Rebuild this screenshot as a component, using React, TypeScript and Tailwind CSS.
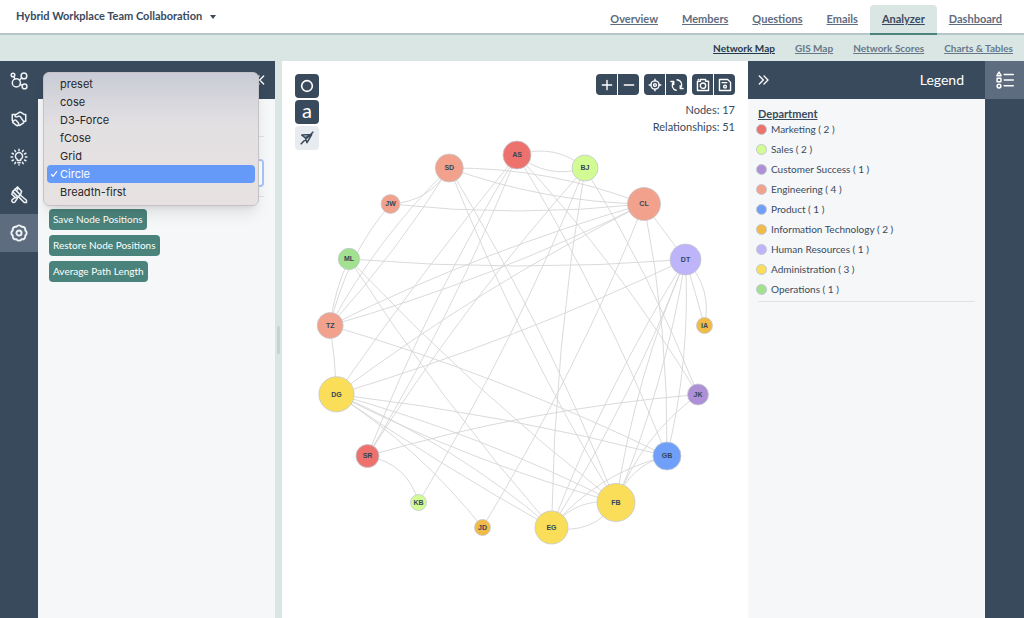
import type { ReactNode } from 'react';
import { RiShakeHandsLine } from 'react-icons/ri';

/* Network analyzer page: nav bars, layout panel, circle graph, legend */

type Node = { x: number; y: number; r: number; fill: string };

const C = {
  red: '#ed716c',
  lime: '#d2fb94',
  purple: '#ae90d6',
  salmon: '#f1a18c',
  blue: '#6f9ff8',
  orange: '#f2bb48',
  lilac: '#beb4fa',
  yellow: '#fade59',
  green: '#a2e18f',
};

const nodes: Record<string, Node> = {
  AS: { x: 517, y: 155, r: 14, fill: C.red },
  BJ: { x: 585, y: 168, r: 13, fill: C.lime },
  CL: { x: 644, y: 204, r: 16.5, fill: C.salmon },
  DT: { x: 685.5, y: 259.5, r: 15.5, fill: C.lilac },
  IA: { x: 704.5, y: 325.5, r: 8, fill: C.orange },
  JK: { x: 698, y: 394.5, r: 10.5, fill: C.purple },
  GB: { x: 667, y: 456, r: 14, fill: C.blue },
  FB: { x: 616, y: 502.5, r: 19, fill: C.yellow },
  EG: { x: 551.5, y: 527.5, r: 16.5, fill: C.yellow },
  JD: { x: 482.5, y: 527.5, r: 8, fill: C.orange },
  KB: { x: 418.5, y: 502.5, r: 8, fill: C.lime },
  SR: { x: 367.5, y: 456, r: 11.5, fill: C.red },
  DG: { x: 336.5, y: 394.3, r: 17.6, fill: C.yellow },
  TZ: { x: 330.2, y: 325.5, r: 13, fill: C.salmon },
  ML: { x: 349, y: 259, r: 10.7, fill: C.green },
  JW: { x: 390.5, y: 204, r: 9.4, fill: C.salmon },
  SD: { x: 449.3, y: 168, r: 14, fill: C.salmon },
};

// from, to, and a point the curve passes through
const edges: [string, string, number, number][] = [
  ['AS', 'BJ', 552, 152],
  ['AS', 'BJ', 552, 171],
  ['SD', 'CL', 545, 176],
  ['SD', 'CL', 545, 194],
  ['JW', 'CL', 518, 211],
  ['CL', 'TZ', 510, 248],
  ['CL', 'TZ', 510, 264],
  ['CL', 'DG', 510, 278],
  ['BJ', 'SR', 447, 339],
  ['BJ', 'KB', 510, 335],
  ['BJ', 'EG', 562, 340],
  ['CL', 'JD', 585, 338],
  ['CL', 'GB', 663, 340],
  ['CL', 'DT', 667, 235],
  ['DT', 'ML', 510, 266],
  ['DT', 'DG', 510, 335],
  ['DT', 'IA', 697, 299],
  ['DT', 'IA', 705, 295],
  ['DT', 'GB', 685, 340],
  ['DT', 'EG', 640, 337],
  ['DT', 'EG', 653, 337],
  ['DT', 'FB', 656, 337],
  ['DT', 'FB', 670, 337],
  ['JK', 'FB', 651, 440],
  ['GB', 'FB', 638, 470],
  ['GB', 'EG', 604, 482],
  ['FB', 'EG', 580, 506],
  ['FB', 'EG', 589, 525],
  ['JK', 'SR', 510, 421],
  ['GB', 'DG', 510, 421],
  ['GB', 'TZ', 515, 389],
  ['SD', 'FB', 524, 335],
  ['SD', 'FB', 541, 335],
  ['AS', 'GB', 615, 337],
  ['AS', 'JK', 615, 272],
  ['BJ', 'JK', 650, 286],
  ['ML', 'EG', 403, 339],
  ['ML', 'FB', 428, 339],
  ['DG', 'FB', 510, 454],
  ['DG', 'FB', 510, 469],
  ['DG', 'EG', 450, 453],
  ['DG', 'EG', 442, 463],
  ['DG', 'JD', 416, 456],
  ['DG', 'TZ', 334, 356],
  ['SR', 'KB', 403, 474],
  ['AS', 'DG', 448, 242],
  ['AS', 'SR', 418, 339],
  ['AS', 'SR', 433, 339],
  ['JW', 'SD', 423, 195],
  ['SD', 'TZ', 386, 239],
  ['SD', 'TZ', 398, 243],
  ['JW', 'TZ', 356, 255],
  ['ML', 'TZ', 337, 291],
];

const legend = [
  { label: 'Marketing ( 2 )', dot: 'bg-[#ed716c]' },
  { label: 'Sales ( 2 )', dot: 'bg-[#d2fb94]' },
  { label: 'Customer Success ( 1 )', dot: 'bg-[#ae90d6]' },
  { label: 'Engineering ( 4 )', dot: 'bg-[#f1a18c]' },
  { label: 'Product ( 1 )', dot: 'bg-[#6f9ff8]' },
  { label: 'Information Technology ( 2 )', dot: 'bg-[#f2bb48]' },
  { label: 'Human Resources ( 1 )', dot: 'bg-[#beb4fa]' },
  { label: 'Administration ( 3 )', dot: 'bg-[#fade59]' },
  { label: 'Operations ( 1 )', dot: 'bg-[#a2e18f]' },
];

const layouts = ['preset', 'cose', 'D3-Force', 'fCose', 'Grid', 'Circle', 'Breadth-first'];

function edgePath([from, to, px, py]: [string, string, number, number]) {
  const a = nodes[from];
  const b = nodes[to];
  const da = Math.hypot(px - a.x, py - a.y);
  const db = Math.hypot(px - b.x, py - b.y);
  const t = da / (da + db);
  const k = 2 * t * (1 - t);
  const cx = (px - (1 - t) ** 2 * a.x - t * t * b.x) / k;
  const cy = (py - (1 - t) ** 2 * a.y - t * t * b.y) / k;
  return `M${a.x} ${a.y}Q${cx} ${cy} ${b.x} ${b.y}`;
}

function Icon({ children, className = 'size-[18px]', width = 2 }: { children: ReactNode; className?: string; width?: number }) {
  return (
    <svg viewBox="0 0 24 24" className={className} fill="none" stroke="currentColor" strokeWidth={width}
      strokeLinecap="round" strokeLinejoin="round" aria-hidden="true">
      {children}
    </svg>
  );
}

const ClusterIcon = () => (
  <Icon>
    <circle cx="8.5" cy="14.5" r="5.4" />
    <circle cx="4" cy="4" r="2.4" />
    <circle cx="18.6" cy="5.2" r="3.8" />
    <circle cx="19.4" cy="19.2" r="3.2" />
    <path d="m12.4 10.8 3.4-2.8M13.5 16.6l2.8 1.3M5.2 6.2l1.3 3" />
  </Icon>
);

const BulbIcon = () => (
  <Icon>
    <path d="M9.8 16.5v-1.3a4.8 4.8 0 1 1 4.4 0v1.3zM10.500 19.5h3" />
    <path d="M12 1.5v2M6.4 3.2l1 1.7M17.6 3.2l-1 1.7M2.8 7l1.8 1M21.2 7l-1.8 1M1.5 12h2M20.5 12h2M2.8 17l1.8-1M21.2 17l-1.8-1M6.4 20.8l1-1.7M17.6 20.8l-1-1.7M12 22.3v.2" />
  </Icon>
);

const ToolsIcon = () => (
  <Icon>
    <path d="m10 1.5 5.5 5.5-1.5 4.5-3.5 3L3.500 7.5z" />
    <path d="m6.5 4.5 8 8M3.5 7.5 2.5 11l5 4.8 3-1.3M10 1.5V5" />
    <path d="m7 15.3-3.2 2.2a2.4 2.4 0 1 0 3.2 3.2l2.8-4.2" />
    <path d="m13.5 12 8.5 7v3h-3l-7.5-7.5" />
  </Icon>
);

const GearIcon = () => (
  <Icon width={2.6}>
    <path d="M20.3 15.4A4 4 0 0 1 15.4 20.3A4 4 0 0 1 8.6 20.3A4 4 0 0 1 3.7 15.4A4 4 0 0 1 3.7 8.6A4 4 0 0 1 8.6 3.7A4 4 0 0 1 15.4 3.7A4 4 0 0 1 20.3 8.6A4 4 0 0 1 20.3 15.4z" />
    <circle cx="12" cy="12" r="3.4" />
  </Icon>
);

function Toolbar() {
  const btn = 'flex size-[21px] items-center justify-center bg-[#394a5d] text-white';
  return (
    <div className="flex gap-[5px]">
      <div className="flex gap-px">
        <button className={`${btn} rounded-l-sm`} aria-label="Zoom in">
          <Icon className="size-3.5" width={2.4}><path d="M12 4v16M4 12h16" /></Icon>
        </button>
        <button className={`${btn} rounded-r-sm`} aria-label="Zoom out">
          <Icon className="size-3.5" width={2.4}><path d="M4 12h16" /></Icon>
        </button>
      </div>
      <div className="flex gap-px">
        <button className={`${btn} rounded-l-sm`} aria-label="Center graph">
          <Icon className="size-3.5" width={2.4}>
            <circle cx="12" cy="12" r="7" />
            <circle cx="12" cy="12" r="2.4" />
            <path d="M12 2v3M12 19v3M2 12h3M19 12h3" />
          </Icon>
        </button>
        <button className={`${btn} rounded-r-sm`} aria-label="Redraw">
          <Icon className="size-3.5" width={2.2}>
            <path d="M1.500 6H6.500V11M6.500 6C1.500 12 4 19.500 10.500 21M22.500 18H17.500V13M17.500 18C22.500 12 20 4.500 12 3" />
          </Icon>
        </button>
      </div>
      <div className="flex gap-px">
        <button className={`${btn} rounded-l-sm`} aria-label="Take snapshot">
          <Icon className="size-3.5" width={2.4}>
            <path d="M2.5 5.5H7.5V2.5h9v3h5v16h-19zM4 2.5h.5" />
            <circle cx="12" cy="13.2" r="4.6" />
          </Icon>
        </button>
        <button className={`${btn} rounded-r-sm`} aria-label="Save">
          <Icon className="size-3.5" width={2.4}>
            <path d="M2.5 2.5h14l5 5v14h-19zM7 8h8" />
            <circle cx="12" cy="14.8" r="2.4" />
          </Icon>
        </button>
      </div>
    </div>
  );
}

function Graph() {
  return (
    <svg viewBox="282 61 466 557" className="absolute inset-0 size-full" role="img" aria-label="Network map">
      <g fill="none" stroke="#d6d6d6" strokeWidth="0.9">
        {edges.map((e, i) => <path key={i} d={edgePath(e)} />)}
      </g>
      {Object.entries(nodes).map(([id, n]) => (
        <g key={id}>
          <circle cx={n.x} cy={n.y} r={n.r} fill={n.fill} stroke="#c3c8cf" strokeWidth="0.8" />
          <text x={n.x} y={n.y + 2.3} textAnchor="middle" fill="#34465a"
            className="font-['Liberation_Sans',sans-serif] text-[7px] font-bold">{id}</text>
        </g>
      ))}
    </svg>
  );
}

function LayoutMenu() {
  return (
    <div role="listbox" aria-label="Layout options"
      className="absolute top-[11px] left-[5px] z-10 flex w-[216px] flex-col rounded-md border border-[#c4c2c6] bg-linear-to-b from-[#c9ccd6] via-[#e3e0e2] via-40% to-[#e7e2e1] px-[3px] pt-[2px] pb-1 font-['Inter',sans-serif] text-[11px] text-[#26282b] shadow-lg">
      {layouts.map((name) => {
        const on = name === 'Circle';
        return (
          <button key={name} role="option" aria-selected={on}
            className={`flex h-[18px] items-center rounded-sm text-left ${on ? 'bg-[#659af8] text-white' : ''}`}>
            <span className="flex w-[13px] justify-center">
              {on && <Icon className="size-2" width={3.5}><path d="m4 13 5 6L20 5" /></Icon>}
            </span>
            {name}
          </button>
        );
      })}
    </div>
  );
}

function SidePanel() {
  const action = 'h-[21px] rounded-sm bg-[#4a837b] px-1 text-[10px] text-white';
  return (
    <section className="relative w-[237px] shrink-0 bg-[#f5f7f9]">
      <div className="flex h-[38px] items-center justify-end bg-[#394a5d] pr-2 text-white">
        <button aria-label="Collapse panel">
          <Icon className="size-4"><path d="m12 6-6 6 6 6M19 6l-6 6 6 6" /></Icon>
        </button>
      </div>
      <div className="px-[11px] pt-[37px]">
        <hr className="border-[#dfe3e7]" />
        <select aria-label="Layout" defaultValue="Circle"
          className="mt-[22px] mb-[9px] block h-7 w-full appearance-none rounded-sm border-2 border-[#a8c5f7] bg-white px-2 text-[11px]">
          {layouts.map((name) => <option key={name}>{name}</option>)}
        </select>
        <hr className="border-[#dfe3e7]" />
        <div className="mt-3 flex flex-col items-start gap-[5px]">
          <button className={action}>Save Node Positions</button>
          <button className={action}>Restore Node Positions</button>
          <button className={action}>Average Path Length</button>
        </div>
      </div>
      <LayoutMenu />
    </section>
  );
}

function Rail() {
  const item = 'flex h-[38px] items-center justify-center text-[#eef2f5]';
  return (
    <aside className="flex w-[38px] shrink-0 flex-col bg-[#394a5d] pt-px">
      <button className={item} aria-label="Network"><ClusterIcon /></button>
      <button className={item} aria-label="Relationships"><RiShakeHandsLine className="size-[18px]" /></button>
      <button className={item} aria-label="Insights"><BulbIcon /></button>
      <button className={item} aria-label="Appearance"><ToolsIcon /></button>
      <button className={`${item} bg-[#5e6c80]`} aria-label="Settings"><GearIcon /></button>
    </aside>
  );
}

function Legend() {
  return (
    <section className="w-[237px] shrink-0 bg-[#f5f7f9]">
      <div className="flex h-[38px] items-center justify-between bg-[#394a5d] pr-[21px] pl-2 text-white">
        <button aria-label="Collapse legend">
          <Icon className="size-4"><path d="m5 6 6 6-6 6M12 6l6 6-6 6" /></Icon>
        </button>
        <h2 className="text-sm">Legend</h2>
      </div>
      <div className="mx-2.5 border-b border-[#dfe3e7] pt-2 pb-0.5">
        <h3 className="text-[11px] leading-[14px] font-bold underline">Department</h3>
        <ul className="-mt-0.5">
          {legend.map((l) => (
            <li key={l.label} className="flex h-5 items-center gap-1 text-[10px]">
              <span className={`-ml-0.5 size-[11px] rounded-full border border-[#c3c8cf] ${l.dot}`} />
              {l.label}
            </li>
          ))}
        </ul>
      </div>
    </section>
  );
}

export default function App() {
  const nav = ['Overview', 'Members', 'Questions', 'Emails', 'Analyzer', 'Dashboard'];
  const sub = ['Network Map', 'GIS Map', 'Network Scores', 'Charts & Tables'];
  const tool = 'flex size-6 items-center justify-center rounded-sm';
  return (
    <div className="flex min-h-screen flex-col bg-white font-['Lato',sans-serif] text-[#394a5d]">
      <header className="flex h-[35px] items-end justify-between border-b-2 border-[#b7c5cc] pr-2.5 pl-4">
        <button className="flex h-full items-center gap-2 text-[11px] font-bold">
          Hybrid Workplace Team Collaboration
          <svg viewBox="0 0 6 4" className="h-1 w-1.5" fill="currentColor" aria-hidden="true"><path d="M0 0h6L3 4z" /></svg>
        </button>
        <nav className="-mb-0.5 flex">
          {nav.map((n) => (
            <a key={n} href="#"
              className={`flex h-[30px] items-center rounded-t-sm border-b-2 px-3 text-[11px] font-bold underline ${n === 'Analyzer' ? 'border-[#4a837b] bg-[#d9e6e4]' : 'border-transparent text-[#5e6c80]'}`}>
              {n}
            </a>
          ))}
        </nav>
      </header>
      <nav className="flex h-[26px] items-center justify-end gap-5 bg-[#d9e6e4] pr-[11px] text-[10px] font-bold">
        {sub.map((s) => (
          <a key={s} href="#" className={`underline ${s === 'Network Map' ? 'text-[#26384b]' : 'text-[#66788a]'}`}>{s}</a>
        ))}
      </nav>

      <div className="flex flex-1">
        <Rail />
        <SidePanel />
        {/* Resize handle */}
        <div className="flex w-[7px] shrink-0 items-center justify-center bg-[#d9e6e4]">
          <span className="h-7 w-[3px] rounded-full bg-[#c5d3d3]" />
        </div>

        <main className="relative flex-1 bg-white">
          <Graph />
          <div className="relative flex items-start justify-between px-[13px] pt-[13px]">
            <div className="flex flex-col gap-0.5">
              <button className={`${tool} bg-[#394a5d] text-white`} aria-label="Node shape">
                <Icon className="size-4" width={2.4}><circle cx="12" cy="12" r="8" /></Icon>
              </button>
              <button className={`${tool} bg-[#394a5d] pb-1 text-xl leading-none text-white`} aria-label="Labels">a</button>
              <button className={`${tool} bg-[#e8ebef]`} aria-label="Toggle arrows">
                <Icon className="size-3.5" width={2.6}><path d="m3 7 17-1-8 14-3-8.5zM2 22 22 2M9 11.5 20 6" /></Icon>
              </button>
            </div>
            <div className="flex flex-col items-end">
              <Toolbar />
              <p className="mt-1.5 text-right text-[11px] leading-[17px]">Nodes: 17<br />Relationships: 51</p>
            </div>
          </div>
        </main>

        <Legend />
        <aside className="w-[39px] shrink-0 bg-[#394a5d]">
          <button className="flex h-[38px] w-full items-center justify-center bg-[#5e6c80] text-white" aria-label="Legend">
            <Icon>
              <path d="M11 4.5h12M11 12h12M11 19.5h12M4 1.5l2.8 4.8H1.2zM1.5 9.7h5v4.6h-5z" />
              <circle cx="4" cy="20" r="2.5" />
            </Icon>
          </button>
        </aside>
      </div>
    </div>
  );
}
